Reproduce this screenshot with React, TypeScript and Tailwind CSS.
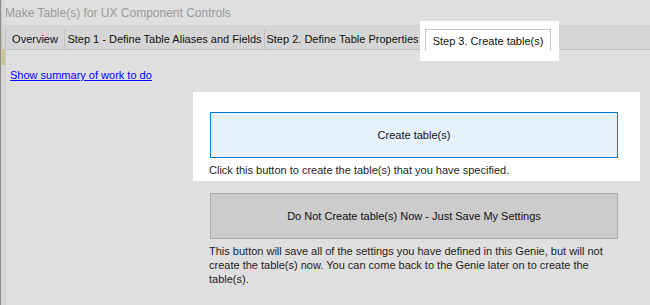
const tabs = [
  { label: 'Overview', w: 'w-[59px]' },
  { label: 'Step 1 - Define Table Aliases and Fields', w: 'w-[200px]' },
  { label: 'Step 2. Define Table Properties', w: 'w-[157px]' },
];

const App = () => {
  return (
    <div className="relative flex h-[305px] w-[650px] overflow-hidden bg-[#dfdfdf] font-['Liberation_Sans',Arial,sans-serif] text-[11px] text-[#1e1e1e]">
      {/* window edge on the left */}
      <div className="flex w-[5px] shrink-0 flex-col border-l border-[#8f8f8f]">
        <div className="h-[25px] border-l border-[#c9c9c9] bg-[#dadada]" />
        <div className="h-[10px] border-l border-[#c9c9c9] bg-[#d5d5d5]" />
        <div className="h-[30px] bg-[#c9c49a]" />
        <div className="flex-1 border-l border-[#c9c9c9] bg-[#dadada]" />
      </div>

      <div className="flex min-w-0 flex-1 flex-col">
        <div className="flex h-[25px] items-center text-[12px] text-[#9b9b9b]">
          Make Table(s) for UX Component Controls
        </div>

        <div className="-ml-[3px] flex h-[25px] border-b border-[#c3c3c3] bg-[#d5d5d5] pl-[3px]">
          {tabs.map((t) => (
            <div
              key={t.label}
              className={`${t.w} mt-[4px] flex items-center justify-center border-l border-[#c3c3c3] text-[#111] last:border-r`}
            >
              {t.label}
            </div>
          ))}
        </div>

        <div className="flex flex-1 flex-col border-l border-[#c9c9c9]">
          <a href="#" className="ml-[4px] mt-[19px] leading-[12px] text-[#0000ff] underline">
            Show summary of work to do
          </a>

          <div className="ml-[187px] mt-[11px] flex h-[89px] w-[447px] flex-col bg-white pl-[17px] pt-[20px]">
            <button className="h-[46px] w-[408px] border border-[#0078d7] bg-[#e5f1fb] text-[#111]">
              Create table(s)
            </button>
            <p className="-ml-[1px] mt-[5px] leading-[14px]">
              Click this button to create the table(s) that you have specified.
            </p>
          </div>

          <div className="ml-[204px] mt-[12px] flex flex-col">
            <button className="h-[46px] w-[408px] border border-[#adadad] bg-[#cccccc] text-[#111]">
              Do Not Create table(s) Now - Just Save My Settings
            </button>
            <p className="-ml-[1px] mt-[5px] w-[420px] leading-[14px]">
              This button will save all of the settings you have defined in this Genie, but will not
              create the table(s) now. You can come back to the Genie later on to create the
              table(s).
            </p>
          </div>
        </div>
      </div>

      {/* highlighted active tab */}
      <div className="absolute left-[420px] top-[21px] h-[40px] w-[139px] bg-white pl-[5px] pt-[8px]">
        <div className="flex h-[22px] w-[126px] items-start justify-center border border-b-0 border-[#c8c8c8] pt-[3px] text-[#111]">
          Step 3. Create table(s)
        </div>
      </div>
    </div>
  );
};

export default App;
